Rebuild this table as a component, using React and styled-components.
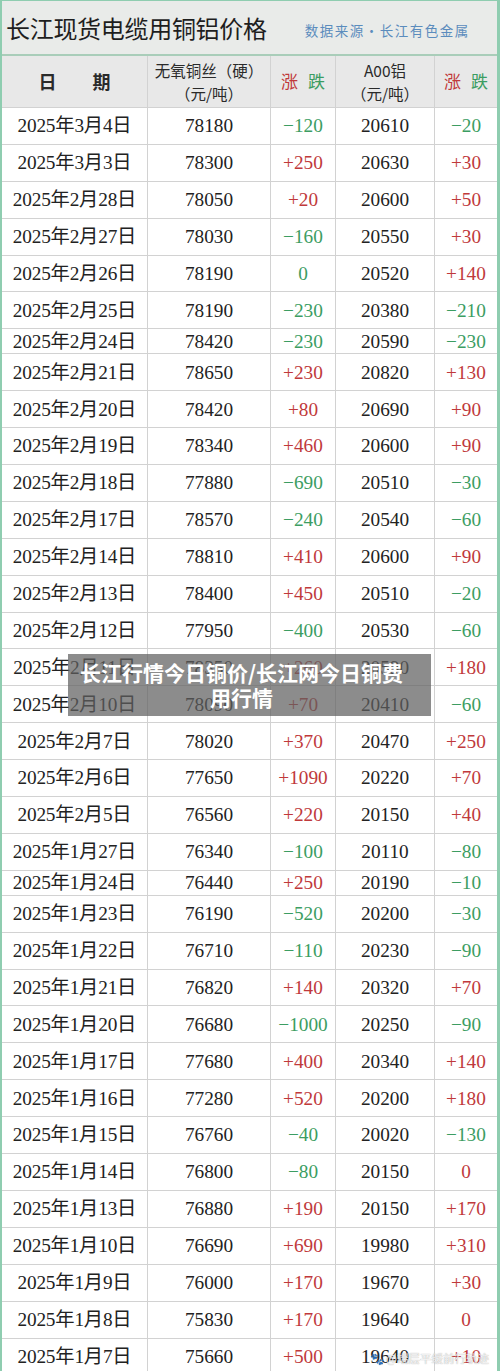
import styled, { createGlobalStyle } from "styled-components";

const GlobalStyle = createGlobalStyle`
  html, body {
    margin: 0;
    padding: 0;
    background: #ffffff;
  }
  #root {
    width: 500px;
    height: 1371px;
    overflow: hidden;
  }
`;

const RED = "#c0393b";
const GREEN = "#3c9d62";
const LINE = "#d2d2d2";
const EDGE = "#8fcdb0";

const COLS = "146px 123px 65px 99px 1fr";

const rows = [
  ["2025年3月4日", "78180", "-120", "20610", "-20"],
  ["2025年3月3日", "78300", "+250", "20630", "+30"],
  ["2025年2月28日", "78050", "+20", "20600", "+50"],
  ["2025年2月27日", "78030", "-160", "20550", "+30"],
  ["2025年2月26日", "78190", "0", "20520", "+140", { cu: "g" }],
  ["2025年2月25日", "78190", "-230", "20380", "-210"],
  ["2025年2月24日", "78420", "-230", "20590", "-230", { short: true }],
  ["2025年2月21日", "78650", "+230", "20820", "+130"],
  ["2025年2月20日", "78420", "+80", "20690", "+90"],
  ["2025年2月19日", "78340", "+460", "20600", "+90"],
  ["2025年2月18日", "77880", "-690", "20510", "-30"],
  ["2025年2月17日", "78570", "-240", "20540", "-60"],
  ["2025年2月14日", "78810", "+410", "20600", "+90"],
  ["2025年2月13日", "78400", "+450", "20510", "-20"],
  ["2025年2月12日", "77950", "-400", "20530", "-60"],
  ["2025年2月11日", "78350", "+260", "20590", "+180"],
  ["2025年2月10日", "78090", "+70", "20410", "-60"],
  ["2025年2月7日", "78020", "+370", "20470", "+250"],
  ["2025年2月6日", "77650", "+1090", "20220", "+70"],
  ["2025年2月5日", "76560", "+220", "20150", "+40"],
  ["2025年1月27日", "76340", "-100", "20110", "-80"],
  ["2025年1月24日", "76440", "+250", "20190", "-10", { short: true }],
  ["2025年1月23日", "76190", "-520", "20200", "-30"],
  ["2025年1月22日", "76710", "-110", "20230", "-90"],
  ["2025年1月21日", "76820", "+140", "20320", "+70"],
  ["2025年1月20日", "76680", "-1000", "20250", "-90"],
  ["2025年1月17日", "77680", "+400", "20340", "+140"],
  ["2025年1月16日", "77280", "+520", "20200", "+180"],
  ["2025年1月15日", "76760", "-40", "20020", "-130"],
  ["2025年1月14日", "76800", "-80", "20150", "0", { al: "r" }],
  ["2025年1月13日", "76880", "+190", "20150", "+170"],
  ["2025年1月10日", "76690", "+690", "19980", "+310"],
  ["2025年1月9日", "76000", "+170", "19670", "+30"],
  ["2025年1月8日", "75830", "+170", "19640", "0", { al: "r" }],
  ["2025年1月7日", "75660", "+500", "19640", "+10"],
];

const Sheet = styled.div`
  position: relative;
  width: 500px;
  box-sizing: border-box;
  border-left: 2px solid ${EDGE};
  border-right: 3px solid ${EDGE};
  font-family: "Liberation Serif", "Noto Sans CJK SC", serif;
  color: #222;
`;

const TitleBar = styled.div`
  height: 56px;
  box-sizing: border-box;
  display: flex;
  align-items: center;
  padding: 0 0 0 4px;
  background: #e9ebe9;
  border-top: 1px solid ${EDGE};
  border-bottom: 2px solid #a9cdb9;
`;

const Title = styled.h1`
  margin: 0;
  font-family: "Noto Sans CJK SC", sans-serif;
  font-weight: 400;
  font-size: 24px;
  letter-spacing: -0.3px;
  color: #1e1e1e;
`;

const Source = styled.span`
  margin-left: 38px;
  margin-top: 4px;
  font-family: "Noto Sans CJK SC", sans-serif;
  font-size: 13.5px;
  letter-spacing: 1.5px;
  color: #5b8cbd;
`;

const Row = styled.div`
  display: grid;
  grid-template-columns: ${COLS};
  height: ${(p) => p.$h}px;
  background: ${(p) => (p.$head ? "#e8e8e8" : "#fff")};
`;

const Cell = styled.div`
  display: flex;
  flex-direction: column;
  align-items: center;
  justify-content: center;
  box-sizing: border-box;
  border-bottom: 1px solid ${LINE};
  border-right: ${(p) => (p.$last ? "none" : `1px solid ${LINE}`)};
  font-size: 19.3px;
  white-space: nowrap;
  letter-spacing: ${(p) => (p.$date ? "-0.2px" : "0")};
  color: ${(p) => p.$color || "#222"};
  line-height: 1;
`;

const HeadText = styled.span`
  font-family: "Noto Sans CJK SC", sans-serif;
  font-size: ${(p) => p.$size || 15}px;
  font-weight: ${(p) => (p.$bold ? 700 : 400)};
  line-height: 1.45;
  color: ${(p) => p.$color || "#2a2a2a"};
`;

const RiseFall = styled.div`
  display: flex;
  gap: 10px;
`;

const Overlay = styled.div`
  position: absolute;
  left: 66px;
  top: 654px;
  width: 363px;
  height: 62px;
  box-sizing: border-box;
  padding: 0 24px 0 8px;
  background: rgba(95, 95, 95, 0.72);
  color: #fff;
  font-family: "Noto Sans CJK SC", sans-serif;
  font-weight: 700;
  font-size: 21px;
  line-height: 25px;
  text-align: center;
  display: flex;
  align-items: center;
  justify-content: center;
`;

const Watermark = styled.div`
  position: absolute;
  right: 8px;
  top: 1350px;
  display: flex;
  align-items: center;
  gap: 2px;
  font-family: "Noto Sans CJK SC", sans-serif;
  font-size: 11.5px;
  color: rgba(255, 255, 255, 0.85);
  text-shadow: 0 0 1px rgba(120, 120, 120, 0.8);
`;

const tone = (v, force) => {
  if (force === "g") return GREEN;
  if (force === "r") return RED;
  if (v.startsWith("-")) return GREEN;
  return RED;
};

const fmt = (v) => (v.startsWith("-") ? "−" + v.slice(1) : v);

export default function App() {
  return (
    <>
      <GlobalStyle />
      <Sheet>
        <TitleBar>
          <Title>长江现货电缆用铜铝价格</Title>
          <Source>数据来源·长江有色金属</Source>
        </TitleBar>
        <Row $head $h={52}>
          <Cell>
            <HeadText $bold $size={18}>
              日&emsp;&emsp;期
            </HeadText>
          </Cell>
          <Cell>
            <HeadText $size={15.5}>无氧铜丝（硬）</HeadText>
            <HeadText $size={15.5}>（元/吨）</HeadText>
          </Cell>
          <Cell>
            <RiseFall>
              <HeadText $size={17} $color={RED}>涨</HeadText>
              <HeadText $size={17} $color={GREEN}>跌</HeadText>
            </RiseFall>
          </Cell>
          <Cell>
            <HeadText $size={15.5}>A00铝</HeadText>
            <HeadText $size={15.5}>（元/吨）</HeadText>
          </Cell>
          <Cell $last>
            <RiseFall>
              <HeadText $size={17} $color={RED}>涨</HeadText>
              <HeadText $size={17} $color={GREEN}>跌</HeadText>
            </RiseFall>
          </Cell>
        </Row>
        {rows.map(([date, cu, cuChg, al, alChg, opt = {}]) => (
          <Row key={date} $h={opt.short ? 25 : 36.9}>
            <Cell $date>{date}</Cell>
            <Cell>{cu}</Cell>
            <Cell $color={tone(cuChg, opt.cu)}>{fmt(cuChg)}</Cell>
            <Cell>{al}</Cell>
            <Cell $last $color={tone(alChg, opt.al)}>
              {fmt(alChg)}
            </Cell>
          </Row>
        ))}
        <Overlay>长江行情今日铜价/长江网今日铜费用行情</Overlay>
        <Watermark>
          <span>🐾</span>
          <span>@端层平缓前行轨迹</span>
        </Watermark>
      </Sheet>
    </>
  );
}
